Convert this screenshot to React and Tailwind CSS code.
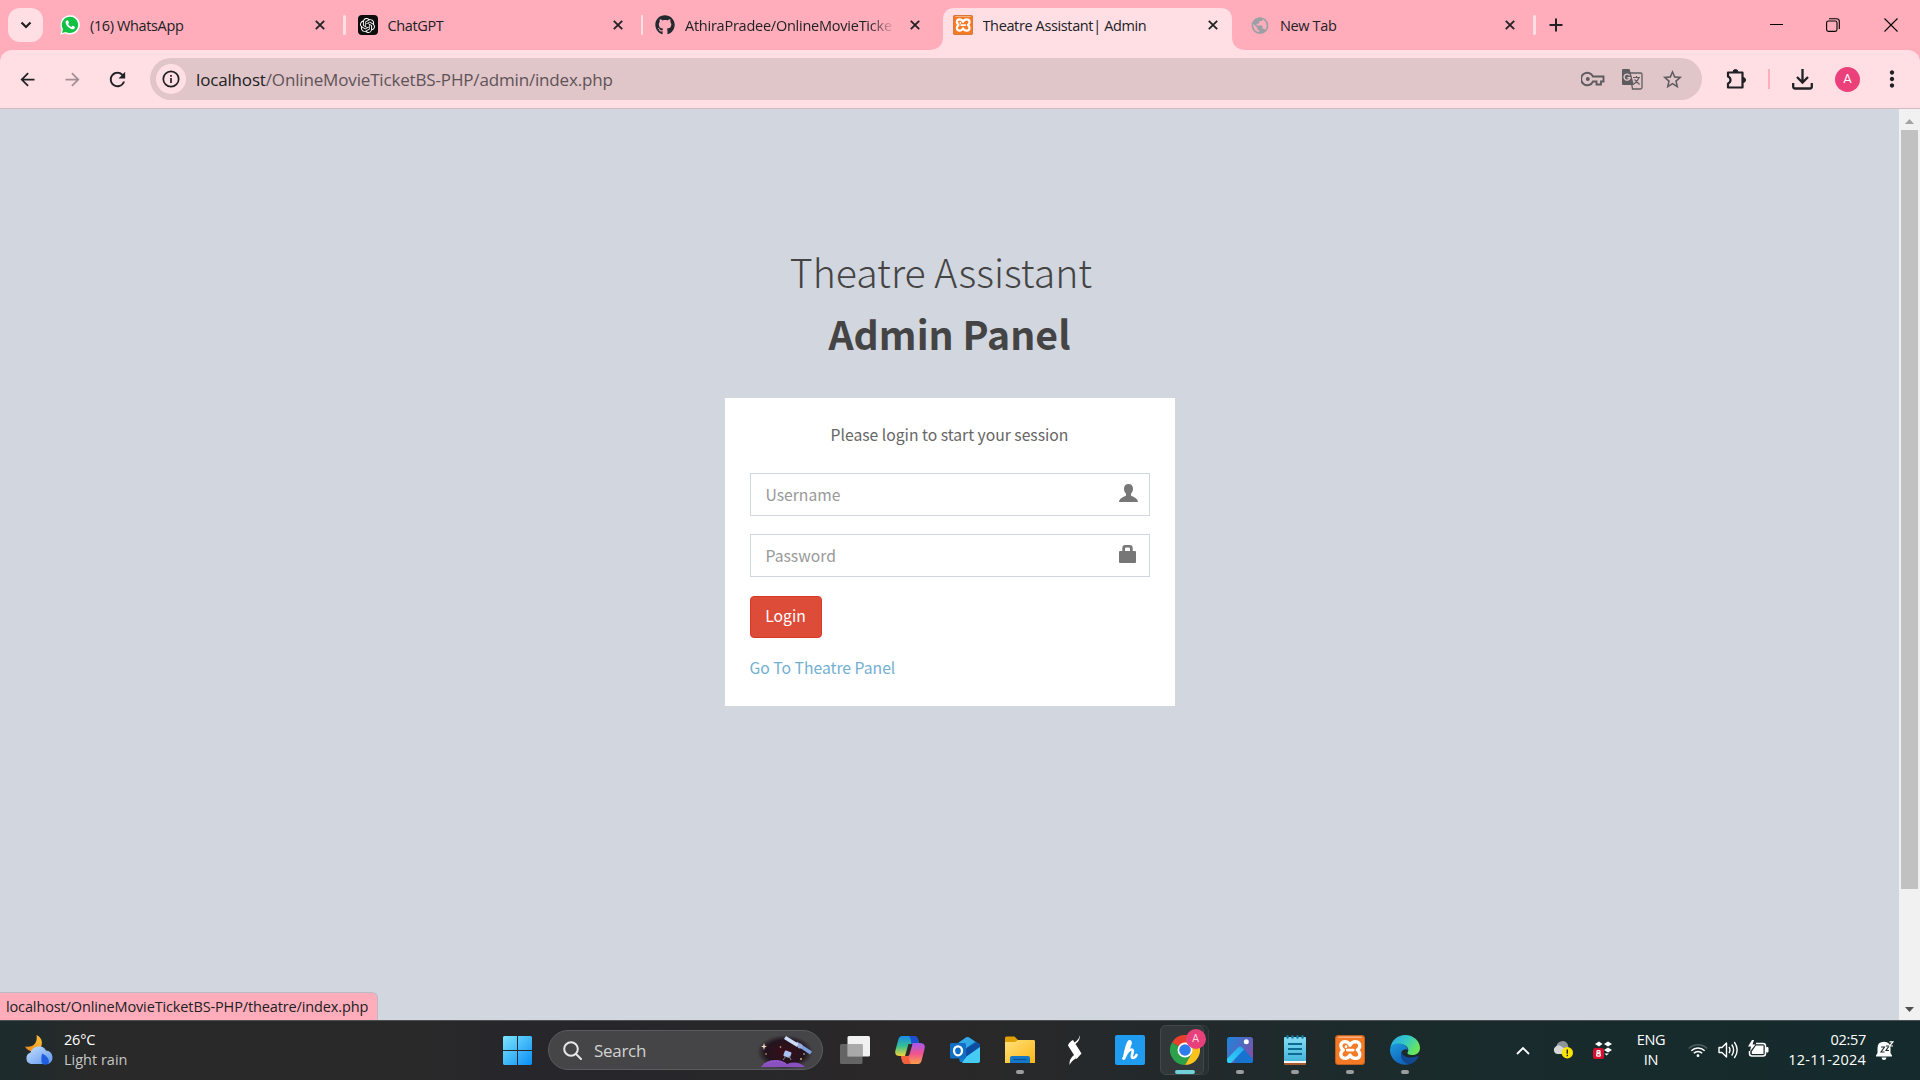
import React from "react";
import { SiOpenai } from "react-icons/si";
import { FaGithub } from "react-icons/fa";
import {
  MdArrowBack,
  MdArrowForward,
  MdRefresh,
  MdStarBorder,
  MdMoreVert,
  MdPublic,
} from "react-icons/md";

const SEGOE = "font-['Open_Sans','Noto_Sans',sans-serif]";
const SOURCE = "font-['Noto_Sans_CJK_SC',sans-serif]";

/* ---------- favicons ---------- */

function WhatsAppIcon() {
  return (
    <svg width="20" height="20" viewBox="0 0 20 20">
      <path d="M0.3 19.7 1.7 14.6A9.7 9.7 0 1 1 5.4 18.3Z" fill="#fff" />
      <path d="M2 18 3 14.3A8.2 8.2 0 1 1 5.8 17Z" fill="#12c143" />
      <path d="M7.2 5.2c-.5 0-1.7.8-1.6 2.4.2 2.6 3.6 6.3 6.8 6.7 1.4.1 2.5-.9 2.5-2.1 0-.6-2-1.5-2.4-1.4-.4.1-.8 1.1-1.2 1.1-.8 0-3-2-3.2-2.9 0-.4.9-.9.9-1.3 0-.5-.8-2.5-1.8-2.5Z" fill="#fff" />
    </svg>
  );
}

function ChatGptIcon() {
  return (
    <span className="flex size-5 items-center justify-center rounded bg-[#0d0d0d] text-white">
      <SiOpenai size={15} />
    </span>
  );
}

function XamppIcon({ size }) {
  return (
    <svg width={size} height={size} viewBox="0 0 30 30">
      <rect x="0.5" y="0.5" width="29" height="29" rx="2.5" fill="#f57a26" stroke="#c0601f" />
      <path d="M4 2.3H26" stroke="#f3b083" strokeWidth="1.6" strokeLinecap="round" />
      <path
        d="M15 10.3Q13.5 6.7 10 6.7 5.8 7 5.8 10.8 6 13.5 8.3 15 5.8 16.8 5.8 19.4 6 23.3 10 23.3 13.5 23.3 15 20 16.5 23.3 20.5 23.3 24.8 23.3 24.8 19.4 24.8 16.8 22.3 15 24.8 13.5 24.8 10.8 24.8 7 20.5 6.7 16.5 6.7 15 10.3Z"
        fill="none"
        stroke="#fff"
        strokeWidth="3.3"
        strokeLinejoin="round"
      />
      <path d="M12.3 15.1H18.3M11 11.5V12" stroke="#fff" strokeWidth="2.6" strokeLinecap="round" />
    </svg>
  );
}

function CloseX() {
  return (
    <svg width="10" height="10" viewBox="0 0 10 10" stroke="#202124" strokeWidth="1.8">
      <path d="M0.8 0.8 9.2 9.2M9.2 0.8 0.8 9.2" />
    </svg>
  );
}

/* ---------- browser chrome ---------- */

function Tab({ icon, title, active, separator, fade }) {
  return (
    <div className="relative flex h-[50px] w-[297.5px] shrink-0 items-center pl-3">
      {active && (
        <svg className="absolute -left-[12px] top-[7px]" width="318" height="43" viewBox="0 0 318 43" fill="#ffdfe4">
          <path d="M0 43C9 43 14 38 14 30V13Q14 1 26 1H291Q303 1 303 13V30C303 38 308 43 317 43Z" />
        </svg>
      )}
      <span className="relative flex size-5 items-center justify-center">{icon}</span>
      <span
        className={`relative ml-[10px] mt-px w-[210px] overflow-hidden whitespace-nowrap text-[14.5px] leading-5 text-[#202124] ${
          fade ? "tracking-[-0.24px] [mask-image:linear-gradient(to_right,black_88%,transparent)]" : "tracking-[-0.37px]"
        }`}
      >
        {title}
      </span>
      <span className="relative ml-[15px] flex">
        <CloseX />
      </span>
      {separator && <span className="ml-auto h-5 w-[2.5px] rounded bg-[#ffdfe4]" />}
    </div>
  );
}

function TabStrip() {
  return (
    <div className="flex h-[50px] items-center bg-[#ffadbb]">
      <div className="ml-2 mr-[5px] flex h-[34px] w-[35px] items-center justify-center rounded-xl bg-[#ffdfe4]">
        <svg width="12" height="8" viewBox="0 0 12 8" fill="none" stroke="#202124" strokeWidth="2.2">
          <path d="M1.5 1.5 6 6 10.5 1.5" />
        </svg>
      </div>
      <Tab icon={<WhatsAppIcon />} title="(16) WhatsApp" separator />
      <Tab icon={<ChatGptIcon />} title="ChatGPT" separator />
      <Tab icon={<FaGithub size={20} color="#24292f" />} title="AthiraPradee/OnlineMovieTicke" fade />
      <Tab icon={<XamppIcon size={20} />} title="Theatre Assistant| Admin" active />
      <Tab icon={<MdPublic size={21} color="#9aa0a6" />} title="New Tab" separator />
      <svg className="ml-[13px]" width="14" height="14" viewBox="0 0 14 14" stroke="#202124" strokeWidth="2">
        <path d="M7 0.5V13.5M0.5 7H13.5" />
      </svg>
      <div className="ml-auto flex items-center pr-[22px] text-black">
        <svg width="13" height="14" viewBox="0 0 13 14" stroke="currentColor">
          <path d="M0 6.5H13" />
        </svg>
        <svg className="ml-[43px]" width="14" height="14" viewBox="0 0 14 14" fill="none" stroke="currentColor" strokeWidth="1.1">
          <rect x="0.6" y="3" width="10.4" height="10.4" rx="1.8" />
          <path d="M3 0.8H10.5Q13.3 0.8 13.3 3.5V11" />
        </svg>
        <svg className="ml-[44px]" width="14" height="14" viewBox="0 0 14 14" stroke="currentColor" strokeWidth="1.1">
          <path d="M0.5 0.5 13.5 13.5M13.5 0.5 0.5 13.5" />
        </svg>
      </div>
    </div>
  );
}

function Toolbar() {
  return (
    <div className="bg-[#ffadbb]">
      <div className="flex h-[59px] items-center rounded-t-xl border-b border-[#d3b9c1] bg-[#ffdfe4] text-[#202124]">
        <MdArrowBack className="ml-[17px]" size={21} />
        <MdArrowForward className="ml-[24px] text-[#a38f93]" size={21} />
        <MdRefresh className="ml-[23px]" size={23} />
        <div className="ml-[21px] flex h-[42px] w-[1552px] items-center rounded-full bg-[#e0c5c9] pl-[6px]">
          <span className="flex size-[30px] items-center justify-center rounded-full bg-[#ffdfe4]">
            <svg width="18" height="18" viewBox="0 0 18 18" fill="none" stroke="#202124" strokeWidth="1.7">
              <circle cx="9" cy="9" r="7.7" />
              <path d="M9 8V13M9 5V6.7" />
            </svg>
          </span>
          <span className="ml-[10px] mt-px text-[17px] leading-6 tracking-[-0.16px] text-[#5e5357]">
            <span className="text-[#202124]">localhost</span>/OnlineMovieTicketBS-PHP/admin/index.php
          </span>
          <span className="ml-auto mr-[18px] flex items-center gap-[17px] text-[#5f5c60]">
            <svg width="24" height="16" viewBox="0 0 24 16" fill="none" stroke="#5f5c60" strokeWidth="1.9">
              <path d="M12 5.5A6.2 6.2 0 1 0 12 10.5H15.5V13.5H20V10.5H22.5V5.5Z" />
              <circle cx="6.8" cy="8" r="2" fill="#5f5c60" stroke="none" />
            </svg>
            <svg className="-ml-px mr-px" width="22" height="22" viewBox="0 0 22 22">
              <path d="M9 5H19.5Q21 5 21 6.5V19.5Q21 21 19.5 21H11.5Z" fill="none" stroke="#5f5c60" strokeWidth="1.3" />
              <path d="M2 1H8.500L13 17H2Q1 17 1 16V2Q1 1 2 1Z" fill="#5f5c60" />
              <path d="M8.6 7.5A3 3 0 1 0 9 9.8H6.3" fill="none" stroke="#e0c5c9" strokeWidth="1.4" />
              <path d="M12 9.5H19M15.5 8V9.5M18 9.5Q17 13 13 16M13.5 11.5 18.5 16.5" fill="none" stroke="#5f5c60" strokeWidth="1.2" />
            </svg>
            <MdStarBorder size={23} />
          </span>
        </div>
        <svg className="ml-[22px]" width="24" height="24" viewBox="0 0 24 24">
          <path
            d="M4 5.5H18.5V20.5H4V16.5Q6.5 15.5 6.5 13T4 9.5Z"
            fill="none"
            stroke="#202124"
            strokeWidth="2.2"
            strokeLinejoin="round"
          />
          <path d="M9 5A2.5 2.5 0 0 1 14 5ZM19 10.5A2.5 2.5 0 0 1 19 15.5Z" fill="#202124" stroke="#202124" />
        </svg>
        <span className="ml-[20px] h-5 w-[2px] bg-[#ffadbb]" />
        <svg className="ml-[22px]" width="21" height="21" viewBox="0 0 21 21" fill="none" stroke="#202124" strokeWidth="2.3">
          <path d="M10.5 0V13M5 8 10.5 13.5 16 8M1.2 14V17.5Q1.2 19.5 3.2 19.5H17.8Q19.8 19.5 19.8 17.5V14" />
        </svg>
        <span className="ml-[22px] flex size-[25px] items-center justify-center rounded-full bg-[#ec407a] font-['Roboto',sans-serif] text-[13px] text-white">
          A
        </span>
        <MdMoreVert className="ml-[19px]" size={26} />
      </div>
    </div>
  );
}

/* ---------- login page ---------- */

function Field({ label, children }) {
  return (
    <div className="flex h-[43px] items-center justify-between border border-[#d2d6de] pl-[15px] pr-[11px] text-[#999]">
      {label}
      <span className="-mt-[3px] flex w-[19px] text-[#777]">{children}</span>
    </div>
  );
}

function LoginPage() {
  return (
    <div className={`flex flex-1 flex-col items-center bg-[#d2d6de] pt-[131px] ${SOURCE}`}>
      <h1 className="w-[450px] text-center text-[39.2px] leading-[62px] text-[#444]">
        <span className="-ml-[17px] font-light">Theatre Assistant</span>
        <br />
        <b>Admin Panel</b>
      </h1>
      <div className="mt-[34px] h-[308px] w-[450px] bg-white px-[25px] pt-[24px] text-[15.7px] leading-[25px] text-[#666]">
        <p className="text-center">Please login to start your session</p>
        <div className="mt-[26px] flex flex-col gap-[18px]">
          <Field label={<span className="-mt-px">Username</span>}>
            <svg width="19" height="18" viewBox="0 0 19 18" fill="currentColor">
              <path d="M9.5 0C12.3 0 14 1.8 14 4.6 14 7 13.2 8.7 12 9.8V11.6C12.5 12.6 18.8 13.6 19 18H0C.2 13.6 6.5 12.6 7 11.6V9.8C5.8 8.7 5 7 5 4.6 5 1.8 6.7 0 9.5 0Z" />
            </svg>
          </Field>
          <Field label={<span>Password</span>}>
            <svg width="17" height="18" viewBox="0 0 17 18" fill="currentColor">
              <path fillRule="evenodd" d="M3.3 6V3Q3.3 0 6.3 0H10.7Q13.7 0 13.7 3V6H16Q17 6 17 7V17Q17 18 16 18H1Q0 18 0 17V7Q0 6 1 6ZM6 6H11V3.8Q11 2.6 9.8 2.6H7.2Q6 2.6 6 3.8Z" />
            </svg>
          </Field>
        </div>
        <button className="mt-[19px] flex h-[42px] w-[72px] items-center justify-center rounded-[4px] border border-[#d73925] bg-[#dd4b39] pb-[3px] text-white">
          Login
        </button>
        <a className="mt-[17px] block text-[#72afd2]">Go To Theatre Panel</a>
      </div>
    </div>
  );
}

function Scrollbar() {
  return (
    <div className="flex w-[21px] flex-col items-center bg-[#f1f1f1]">
      <svg className="mt-[10px]" width="9" height="5" viewBox="0 0 9 5" fill="#a3a3a3">
        <path d="M0 5 4.5 0 9 5Z" />
      </svg>
      <div className="mt-[6px] h-[759px] w-[17px] bg-[#c1c1c1]" />
      <svg className="mb-[8px] mt-auto" width="9" height="5" viewBox="0 0 9 5" fill="#505050">
        <path d="M0 0 4.5 5 9 0Z" />
      </svg>
    </div>
  );
}

/* ---------- taskbar ---------- */

function WeatherIcon() {
  return (
    <svg width="30" height="30" viewBox="0 0 30 30">
      <defs>
        <linearGradient id="moon" x1="1" y1="0" x2="0" y2="1">
          <stop offset="0" stopColor="#fbc534" />
          <stop offset="1" stopColor="#f0841a" />
        </linearGradient>
        <linearGradient id="cloud" x1="0" y1="0" x2="1" y2="1">
          <stop offset="0" stopColor="#c6e0fd" />
          <stop offset="1" stopColor="#5f96ee" />
        </linearGradient>
      </defs>
      <path d="M11.5 0C18 3 19 11 13 15 8 18 2 16 0 11.5 8 13 13 8 11.5 0Z" fill="url(#moon)" />
      <path d="M6 29A6 6 0 0 1 5.5 17.5 8.5 8.5 0 0 1 21 15.5 7 7 0 0 1 23 29Z" fill="url(#cloud)" />
      <path d="M17 18.5Q24 22 24 26.5A3.8 3.8 0 0 1 16.5 26.5Q16 23 17 18.5Z" fill="#1f5fe0" />
    </svg>
  );
}

function WindowsIcon() {
  return (
    <svg width="29" height="29" viewBox="0 0 29 29">
      <defs>
        <linearGradient id="win" x1="0" y1="0" x2="1" y2="1">
          <stop offset="0" stopColor="#7be6fd" />
          <stop offset="1" stopColor="#0a8cf5" />
        </linearGradient>
      </defs>
      <path d="M1 0H14V14H0V1ZM15 0H28L29 1V14H15ZM0 15H14V29H1L0 28ZM15 15H29V28L28 29H15Z" fill="url(#win)" />
    </svg>
  );
}

function SpaceArt() {
  return (
    <svg width="57" height="34" viewBox="0 0 57 34">
      <defs>
        <radialGradient id="space">
          <stop offset="0" stopColor="#3a0d18" />
          <stop offset="0.7" stopColor="#22141d" />
          <stop offset="1" stopColor="#22141d" stopOpacity="0" />
        </radialGradient>
      </defs>
      <ellipse cx="29" cy="17" rx="28" ry="17" fill="url(#space)" />
      <path d="M5 32Q11 24 21 25 26 25 31 29 41 25 49 32Z" fill="#8b50c0" />
      <path d="M8 29.5Q13 26 20 26.5 27 26 31 30" fill="none" stroke="#a468d2" strokeDasharray="1.5 2" />
      <path d="M40 8 55 18" stroke="#7da0e0" strokeWidth="3.6" />
      <path d="M29 2.5 42 10.5" stroke="#cfdcf8" strokeWidth="3.8" />
      <circle cx="44" cy="11" r="2.5" fill="#98abdc" />
      <rect x="28" y="16" width="7" height="6" rx="1" fill="#a9c4f2" transform="rotate(20 31 19)" />
      <path d="M27 25 30 21M35 25 33 21" stroke="#7681a0" />
      <path d="M8 8 8.8 10.7 11 11.5 8.8 12.3 8 15 7.2 12.3 5 11.5 7.2 10.7Z" fill="#f5dfc2" />
      <circle cx="24.5" cy="12" r="0.8" fill="#eac08a" />
      <circle cx="10" cy="19" r="0.8" fill="#eac08a" />
      <circle cx="45" cy="24" r="0.9" fill="#eac08a" />
      <circle cx="48" cy="19" r="0.7" fill="#fff" />
    </svg>
  );
}

function TaskViewIcon() {
  return (
    <svg width="30" height="28" viewBox="0 0 30 28">
      <rect x="7.5" y="0" width="22.5" height="20.5" rx="1.5" fill="#f1f1f1" />
      <rect x="0" y="8" width="22.5" height="20" rx="1.5" fill="#707070" fillOpacity="0.85" />
      <path d="M7.5 8H22.5V20.5H7.5Z" fill="#a9a9a9" />
    </svg>
  );
}

function CopilotIcon() {
  return (
    <svg width="30" height="28" viewBox="0 0 30 28">
      <defs>
        <linearGradient id="copA" x1="0" y1="0" x2="0" y2="1">
          <stop offset="0" stopColor="#1a8be8" />
          <stop offset="0.5" stopColor="#35bf95" />
          <stop offset="1" stopColor="#f3d435" />
        </linearGradient>
        <linearGradient id="copB" x1="0" y1="0" x2="0" y2="1">
          <stop offset="0" stopColor="#a259f0" />
          <stop offset="0.5" stopColor="#f0538f" />
          <stop offset="1" stopColor="#fba04b" />
        </linearGradient>
      </defs>
      <path d="M7 0H19Q22 0 23 3.5L24 7H20Q17 7 16 10L12.5 20H5Q-1 20 .5 14L3.5 3Q4.5 0 7 0Z" fill="url(#copA)" />
      <path d="M14 0H19Q22 0 23 3.5L24 7H20Q17.5 7 16.5 9Q16 2 14 0Z" fill="#1d4fd0" />
      <path d="M23 28H11Q8 28 7 24.5L6 20H10Q13 20 14 17L17.5 7H25Q31 7 29.5 13L26.5 25Q25.5 28 23 28Z" fill="url(#copB)" />
      <path d="M16 28H11Q8 28 7 24.5L6 20H10Q12.5 20 13.5 18 14 25 16 28Z" fill="#f2603d" />
      <path d="M13.5 8H17.5L14.5 18.5Q14 20 12.5 20H10Z" fill="#2a2928" />
    </svg>
  );
}

function OutlookIcon() {
  return (
    <svg width="30" height="28" viewBox="0 0 30 28">
      <path d="M5 9 16 1.5Q17.5 .5 19 1.5L30 8.5V26H10Z" fill="#1279cf" />
      <path d="M7 8 16 1.5Q17.5 .5 19 1.5L25 5.5 12 15Z" fill="#33a8e4" />
      <path d="M12 15 27 6 30 9V11L14 22Z" fill="#0d4c9f" />
      <path d="M12 27 16 21 30 11V25Q30 27 28 27Z" fill="#46cbf5" />
      <rect x="0" y="7" width="16" height="15.5" rx="1.5" fill="#0f6fc6" />
      <ellipse cx="8" cy="14.8" rx="4" ry="4.5" fill="none" stroke="#fff" strokeWidth="2.3" />
    </svg>
  );
}

function FolderIcon() {
  return (
    <svg width="30" height="28" viewBox="0 0 30 28">
      <defs>
        <linearGradient id="fold" x1="0" y1="0" x2="1" y2="1">
          <stop offset="0" stopColor="#ffe07a" />
          <stop offset="1" stopColor="#fbb716" />
        </linearGradient>
      </defs>
      <path d="M0 2Q0 .5 1.5 .5H9.5L13 4H28Q30 4 30 6V12H0Z" fill="#e0a106" />
      <path d="M0 6H10L13 4H28.5Q30 4 30 5.5V27H0Z" fill="url(#fold)" />
      <path d="M5 27V22Q5 20 7 20H23Q25 20 25 22V27Z" fill="#1478c8" />
      <path d="M8.5 23.5H21.5" stroke="#0b4f90" strokeWidth="1.2" />
    </svg>
  );
}

function BoltIcon() {
  return (
    <svg width="14" height="30" viewBox="0 0 14 30" fill="#fff">
      <path d="M12 0Q12.5 5 7.5 9L13.5 18.5 8.5 24 0 10.5Q1 7 5 5L6.5 7.5Q11 5 12 0ZM1.5 30Q1 24 6 20L8 23.5Q4 25 1.5 30Z" />
    </svg>
  );
}

function HIcon() {
  return (
    <svg width="30" height="30" viewBox="0 0 30 30">
      <rect width="30" height="30" rx="2" fill="#1f9cf0" />
      <path d="M8.5 23.5Q14 14 15.5 8.5 15.8 6 14 6.5 12 8 9 23.5 13 14.5 16.5 14.5 18.5 14.5 17.5 18 16 23 18 23 20 23 21.5 20" fill="none" stroke="#fff" strokeWidth="2.7" strokeLinecap="round" strokeLinejoin="round" />
    </svg>
  );
}

function ChromeIcon() {
  return (
    <svg width="30" height="30" viewBox="0 0 30 30">
      <path d="M15 15 2 7.5A15 15 0 0 1 28 7.5H15Z" fill="#e8402f" />
      <path d="M15 15 2 7.5A15 15 0 0 0 15 30L21.5 18.7Z" fill="#2aa14a" />
      <path d="M15 7.5H28A15 15 0 0 1 15 30L21.5 18.7Z" fill="#fcc31e" />
      <circle cx="15" cy="15" r="7.5" fill="#fff" />
      <circle cx="15" cy="15" r="5.8" fill="#2f7bed" />
    </svg>
  );
}

function PhotosIcon() {
  return (
    <svg width="26" height="26" viewBox="0 0 26 26">
      <defs>
        <linearGradient id="ph" x1="0" y1="0" x2="1" y2="0.6">
          <stop offset="0" stopColor="#1a86dd" />
          <stop offset="1" stopColor="#7a52ab" />
        </linearGradient>
        <linearGradient id="hill" x1="0" y1="1" x2="1" y2="0">
          <stop offset="0" stopColor="#2fd4fb" />
          <stop offset="1" stopColor="#2aa8ee" />
        </linearGradient>
        <clipPath id="phClip">
          <rect width="26" height="26" rx="2.5" />
        </clipPath>
      </defs>
      <g clipPath="url(#phClip)">
        <rect width="26" height="26" fill="url(#ph)" />
        <path d="M8 14 11 10.5Q13 8.5 15 10.5L26 22V26H8Z" fill="#1673cf" />
        <path d="M0 22 11 10.5Q13 8.5 15 10.5L17 12.5 4 26H0Z" fill="url(#hill)" />
      </g>
      <circle cx="19.3" cy="4.8" r="2.5" fill="#fff" />
    </svg>
  );
}

function NotepadIcon() {
  return (
    <svg width="22" height="30" viewBox="0 0 22 30">
      <defs>
        <linearGradient id="np" x1="0" y1="0" x2="0" y2="1">
          <stop offset="0" stopColor="#86dcf2" />
          <stop offset="1" stopColor="#44b5dc" />
        </linearGradient>
      </defs>
      <rect y="26" width="22" height="4" rx="1" fill="#a6592c" />
      <rect y="24" width="22" height="4" fill="#f4f4f4" />
      <rect y="2" width="22" height="24" rx="1" fill="url(#np)" />
      <path d="M4 9H18M4 14H18M4 19H18" stroke="#0d6a90" strokeWidth="1.8" />
      <path d="M3.5 1.2V2.5M8.5 1.2V2.5M13.5 1.2V2.5M18.5 1.2V2.5" stroke="#0f7ba5" strokeWidth="2.4" strokeLinecap="round" />
    </svg>
  );
}

function EdgeIcon() {
  return (
    <svg width="30" height="30" viewBox="0 0 30 30">
      <defs>
        <linearGradient id="edA" x1="0" y1="0" x2="1" y2="0.5">
          <stop offset="0" stopColor="#2aa7e8" />
          <stop offset="0.55" stopColor="#34c9c5" />
          <stop offset="1" stopColor="#6ae65a" />
        </linearGradient>
        <linearGradient id="edB" x1="0" y1="0" x2="0.6" y2="1">
          <stop offset="0" stopColor="#1b9be0" />
          <stop offset="1" stopColor="#1262b8" />
        </linearGradient>
      </defs>
      <path d="M.3 13C1.5 5 8 0 15 0 24 0 30 6.5 30 13 30 17.5 26.5 20 22.5 20 18.5 20 17 18.5 17.5 17.5 19.5 15 18 11 13 9.5 8 8.5 2 10 .3 13Z" fill="url(#edA)" />
      <path d="M0 15C0 10 5 8 9.5 8.5 14.5 9 18 12 18 15.5 17 13.5 13 13.5 11.5 17 10 22 14 28.5 20 29 10 32 0 25 0 15Z" fill="url(#edB)" />
      <path d="M11.5 17C9.5 23 14 29 20 29 24 28 27 25 28.5 22 28.5 21 27.5 21 26.5 21.5 20 24 12.5 22 11.5 17Z" fill="#114a93" />
    </svg>
  );
}

function TaskbarApp({ children, running }) {
  return (
    <div className="flex h-[50px] w-[55px] flex-col items-center">
      <div className="flex h-[50px] items-center">{children}</div>
      {running && <span className="-mt-[5px] h-1 w-2 shrink-0 rounded-full bg-[#9a9d9d]" />}
    </div>
  );
}

function ChromeApp() {
  return (
    <div className="relative flex w-[55px] flex-col items-center">
      <div className="absolute left-[3px] top-0 h-[50px] w-[49px] rounded-md border border-[#363c3e] bg-[#282f30]" />
      <div className="absolute left-[3px] top-0 h-[50px] w-[44px] rounded-md border border-[#42484a] bg-[#323839]" />
      <div className="relative flex h-[50px] items-center">
        <ChromeIcon />
        <span className="absolute -right-[6px] top-[4px] flex size-5 items-center justify-center rounded-full bg-[#e8407b] font-['Roboto',sans-serif] text-[11px] text-[#fbd6e2]">
          A
        </span>
      </div>
      <span className="relative -mt-[5px] h-1 w-5 shrink-0 rounded-full bg-[#70d1d8]" />
    </div>
  );
}

function Tray() {
  return (
    <div className="flex h-full items-center text-white">
      <svg width="14" height="9" viewBox="0 0 14 9" fill="none" stroke="currentColor" strokeWidth="1.8">
        <path d="M1 8 7 2 13 8" />
      </svg>
      <svg className="ml-[23px]" width="20" height="18" viewBox="0 0 20 18">
        <path d="M4 12.5A4 4 0 0 1 3.5 5 6 6 0 0 1 15 4L16 12Z" fill="#8f9499" />
        <path d="M4 13A4 4 0 0 1 3 5.5Q6 3 9 6L15 9V13Z" fill="#d5d7d9" />
        <circle cx="14.3" cy="11.8" r="5.7" fill="#fde300" />
        <path d="M14.3 8.5V12.7M14.3 13.7V15.2" stroke="#222" strokeWidth="1.4" />
      </svg>
      <svg className="ml-[20px]" width="19" height="18" viewBox="0 0 19 18">
        <path d="M2 3 6 .5 9.5 3 6 5.5ZM11 3 15 .5 19 3 15 5.5ZM11 9 15 6.5 19 9 15 11.5ZM11.5 12.5H16L13.5 14.500Z" fill="#fff" />
        <rect x="0" y="7" width="11" height="11" rx="2.5" fill="#d8102f" />
        <rect x="4" y="9.700" width="3" height="2.300" rx="0.8" fill="none" stroke="#fff" strokeWidth="1.3" />
        <rect x="3.7" y="12.500" width="3.600" height="2.600" rx="0.9" fill="none" stroke="#fff" strokeWidth="1.3" />
      </svg>
      <div className="ml-[23px] w-[32px] text-center text-[14.5px] leading-5 tracking-[-0.3px]">
        ENG
        <br />
        IN
      </div>
      <svg className="ml-[21px]" width="20" height="16" viewBox="0 0 20 16" fill="none" stroke="#fff" strokeWidth="1.5">
        <path d="M0.8 6.5A13 13 0 0 1 19.2 6.5" stroke="#4d5f60" />
        <path d="M3.3 8.8A9.5 9.5 0 0 1 16.7 8.8M5.8 11.2A6 6 0 0 1 14.2 11.2" />
        <circle cx="10" cy="13.7" r="1.4" fill="#fff" stroke="none" />
      </svg>
      <svg className="ml-[10px]" width="21" height="18" viewBox="0 0 21 18" fill="none" stroke="#fff" strokeWidth="1.4" strokeLinejoin="round">
        <path d="M1 6.5H4L8.500 2V16L4 11.5H1ZM11 6Q13 9 11 12M13.7 3.5Q17.5 9 13.7 14.5M16.3 1Q22 9 16.3 17" />
      </svg>
      <svg className="ml-[9px] -mt-[3px]" width="21" height="17" viewBox="0 0 21 17">
        <path d="M8 3.5H15Q17.5 3.5 17.5 6V13.5Q17.5 16 15 16H4Q1.5 16 1.5 13.5V11" fill="none" stroke="#fff" strokeWidth="1.5" />
        <path d="M8 5.5H15.5V14H3.8V11.5Z" fill="#fff" />
        <path d="M18.5 7.5H20V12H18.5Z" fill="#fff" stroke="#fff" />
        <path d="M4 0 0 6.5H3L2 11.5 7.5 4.5H4.5L6 0Z" fill="#fff" />
      </svg>
      <div className="ml-[17px] w-[80px] whitespace-nowrap text-right text-[14.5px] leading-5">
        <span className="tracking-[-0.3px]">02:57</span>
        <br />
        <span className="tracking-[0.2px]">12-11-2024</span>
      </div>
      <svg className="ml-[10px]" width="18" height="19" viewBox="0 0 18 19">
        <path d="M0 14.5 1.5 12V7Q1.5 .8 8 .8 14.5 1 14.5 7V12L16 14.5V15.5H0ZM5.5 16.5H10.5Q10 19 8 19T5.5 16.5Z" fill="#fff" />
        <path d="M5 6H8.5L5 11H8.5M10 5H13L10 9.5H13" fill="none" stroke="#172a2b" strokeWidth="1.1" />
        <path d="M13.5 .8H17L13.5 5H17" fill="none" stroke="#fff" strokeWidth="1.2" />
      </svg>
    </div>
  );
}

function Taskbar() {
  return (
    <div className="flex h-[60px] items-center border-t border-[#4b5152] bg-[linear-gradient(90deg,#1c2b2d_0,#292929_90px,#29292a_420px,#26262b_540px,#2a2828_940px,#23292b_1150px,#1a2b2c_1440px,#142a2c_1920px)] pb-px">
      <div className="ml-[25px] flex w-[478px] items-center">
        <WeatherIcon />
        <div className="ml-[9px] text-[14.5px] leading-5 text-white">
          <div className="tracking-[-0.2px]">26°C</div>
          <div className="text-[#c6c6c6]">Light rain</div>
        </div>
      </div>
      <WindowsIcon />
      <div className="ml-4 flex h-10 w-[275px] items-center rounded-full border border-[#5b5b5e] bg-[#454547] pl-[14px] pr-[9px]">
        <svg width="19" height="19" viewBox="0 0 19 19" fill="none" stroke="#e8e8e8" strokeWidth="2" strokeLinecap="round">
          <circle cx="8" cy="8" r="6.8" />
          <path d="M13 13 18 18" />
        </svg>
        <span className="ml-[12px] mt-px text-[17px] leading-6 tracking-[-0.3px] text-[#d2d2d2]">Search</span>
        <span className="ml-auto mt-1">
          <SpaceArt />
        </span>
      </div>
      <div className="ml-[4px] flex">
        <TaskbarApp><TaskViewIcon /></TaskbarApp>
        <TaskbarApp><CopilotIcon /></TaskbarApp>
        <TaskbarApp><OutlookIcon /></TaskbarApp>
        <TaskbarApp running><FolderIcon /></TaskbarApp>
        <TaskbarApp><BoltIcon /></TaskbarApp>
        <TaskbarApp><HIcon /></TaskbarApp>
        <ChromeApp />
        <TaskbarApp running><PhotosIcon /></TaskbarApp>
        <TaskbarApp running><NotepadIcon /></TaskbarApp>
        <TaskbarApp running><XamppIcon size={30} /></TaskbarApp>
        <TaskbarApp running><EdgeIcon /></TaskbarApp>
      </div>
      <div className="ml-auto h-full pr-[26px]">
        <Tray />
      </div>
    </div>
  );
}

export default function App() {
  return (
    <div className={`flex h-[1080px] w-[1920px] flex-col overflow-hidden ${SEGOE}`}>
      <TabStrip />
      <Toolbar />
      <div className="relative flex min-h-0 flex-1">
        <LoginPage />
        <Scrollbar />
        <div className="absolute bottom-0 left-0 flex h-[28px] w-[378px] items-center whitespace-nowrap rounded-tr-md border-r border-t border-[#b9bcc4] bg-[#ffadbb] pl-[6px] text-[14.5px] tracking-[-0.13px] text-[#202124]">
          localhost/OnlineMovieTicketBS-PHP/theatre/index.php
        </div>
      </div>
      <Taskbar />
    </div>
  );
}
